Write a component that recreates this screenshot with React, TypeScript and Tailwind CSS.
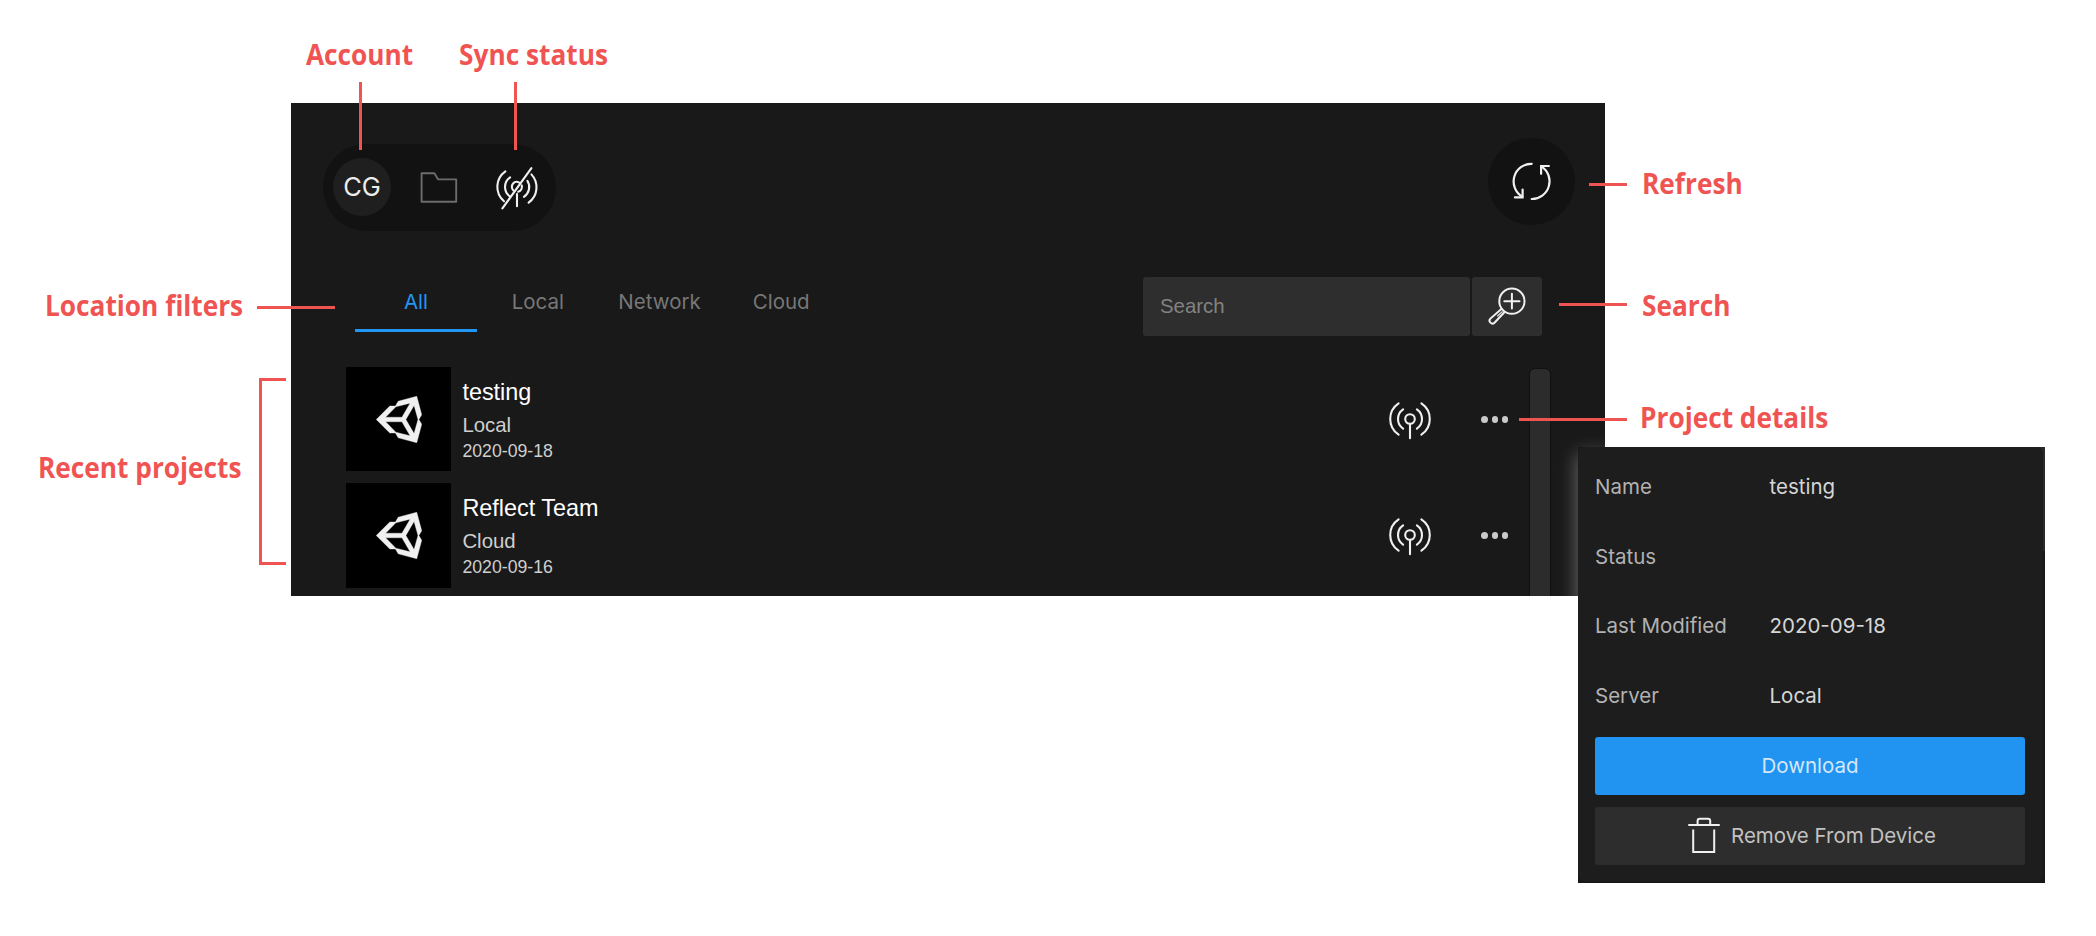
import type { ReactNode } from "react";

const INTER = "font-['Inter','Liberation_Sans',sans-serif]";
const ARIAL = "font-['Liberation_Sans',Arial,sans-serif]";

function FolderIcon() {
  return (
    <svg width="40" height="34" viewBox="0 0 40 34" fill="none" stroke="#6c6c6c" strokeWidth="1.9" strokeLinejoin="round">
      <path d="M2.6 2.2H15.4L19.2 8.4H37.2V30.8H2.6Z" />
    </svg>
  );
}

function AntennaIcon() {
  return (
    <svg width="44" height="42" viewBox="-22 -18 44 42" fill="none" stroke="#f0f0f0" strokeWidth="2.1" strokeLinecap="round">
      <circle r="4.8" />
      <path d="M0 5V19.3" />
      <path d="M6.9 -9.6A11.6 11.6 0 0 1 6.9 9.6M-6.9 -9.6A11.6 11.6 0 0 0 -6.9 9.6" />
      <path d="M11.4 -15.7A18.9 18.9 0 0 1 11.4 15.7M-11.4 -15.7A18.9 18.9 0 0 0 -11.4 15.7" />
    </svg>
  );
}

function AntennaOffIcon() {
  return (
    <svg width="46" height="46" viewBox="-23 -22 46 46" fill="none" stroke="#f0f0f0" strokeWidth="2.1" strokeLinecap="round">
      <path d="M-14.6 21.4L14.4 -18.8" />
      <path d="M-3.6 3.4A4.8 4.8 0 0 1 3 -3.8" />
      <path d="M4.7 -1.6A4.8 4.8 0 0 1 1.2 4.7" />
      <path d="M0 7V19.3" />
      <path d="M-6.9 -9.6A11.6 11.6 0 0 0 -7.4 9.2" />
      <path d="M10.4 -6.2A11.6 11.6 0 0 1 6.9 9.8" />
      <path d="M-11.6 -15.7A18.9 18.9 0 0 0 -13 14.2" />
      <path d="M14.4 -12.6A18.9 18.9 0 0 1 11.6 15.7" />
    </svg>
  );
}

function RefreshIcon() {
  return (
    <svg width="44" height="44" viewBox="-21.7 -21.4 44 44" fill="none" stroke="#f0f0f0" strokeWidth="2.2" strokeLinecap="round" strokeLinejoin="miter">
      <path d="M0 -17.6A17.7 17.7 0 0 0 -9.6 15.2" />
      <path d="M-16.8 16H-9.1V8.2" />
      <path d="M0 17.6A17.7 17.7 0 0 0 10 -14.8" />
      <path d="M17.2 -15.4H9.4V-7.6" />
    </svg>
  );
}

function MagnifierIcon() {
  return (
    <svg width="40" height="40" viewBox="0 0 40 40" fill="none" stroke="#f0f0f0" strokeWidth="2" strokeLinecap="round">
      <circle cx="25.9" cy="15.2" r="12.6" />
      <path d="M25.9 7.8V22.6M18.3 15.2H33.5" />
      <path d="M15.4 23L4.4 32.6A2.9 2.9 0 0 0 8.5 36.7L18.6 26" />
      <path d="M16.2 25.6L11.6 30" strokeWidth="1.1" />
    </svg>
  );
}

function TrashIcon() {
  return (
    <svg width="34" height="38" viewBox="0 0.6 34 38" fill="none" stroke="#f0f0f0" strokeWidth="2" strokeLinecap="round">
      <path d="M2 8.6H32" />
      <path d="M10.6 8V4.6Q10.6 2.4 12.8 2.4H21Q23.2 2.4 23.2 4.6V8" />
      <path d="M6.2 13V35.5H27.2V13" strokeLinecap="butt" />
    </svg>
  );
}

function CubeIcon() {
  return (
    <svg width="46" height="47" viewBox="13 12 488 488" preserveAspectRatio="none" fill="#f0f0f0" stroke="#f0f0f0" strokeWidth="4">
      <path d="M498.11 206.4L445.31 14.72 248.2 66.08 219 116.14l-59.2-.43L15.54 256l144.28 140.32 59.17-.43 29.24 50 197.08 51.36 52.8-191.62L468.11 256zM223.77 124.2L374.55 86.51 288 232.33H114.87zm0 263.63L114.87 279.71H288l86.55 145.81zm193 14L330.17 256l86.58-145.84L458.56 256z" />
    </svg>
  );
}

function Label({ className, children }: { className: string; children: ReactNode }) {
  return (
    <span
      className={`absolute h-10 origin-left scale-x-[0.905] whitespace-nowrap font-['Open_Sans','Noto_Sans',sans-serif] text-[29px] font-bold leading-10 text-[#f05452] ${className}`}
    >
      {children}
    </span>
  );
}

function Line({ className }: { className: string }) {
  return <div className={`absolute bg-[#f05452] ${className}`} />;
}

function Project({ name, place, date, thumb }: { name: string; place: string; date: string; thumb: string }) {
  return (
    <div className="flex h-[116px] items-start">
      <div className={`flex w-[105px] shrink-0 items-center justify-center bg-black ${thumb}`}>
        <CubeIcon />
      </div>
      <div className={`ml-[11.4px] flex grow flex-col pt-[9px] ${ARIAL}`}>
        <span className="text-[23.4px] leading-[33px] text-white">{name}</span>
        <span className="text-[20.4px] leading-[33.5px] text-[#cfcfcf]">{place}</span>
        <span className="text-[17.7px] leading-[16px] text-[#cfcfcf]">{date}</span>
      </div>
      <div className="pt-[34px]">
        <AntennaIcon />
      </div>
      <div className="ml-[49px] mr-[21.7px] flex gap-1 pt-[49.4px]">
        <i className="size-[6.3px] rounded-full bg-[#cacaca]" />
        <i className="size-[6.3px] rounded-full bg-[#cacaca]" />
        <i className="size-[6.3px] rounded-full bg-[#cacaca]" />
      </div>
    </div>
  );
}

function Detail({ label, value }: { label: string; value?: string }) {
  return (
    <div className="flex h-[69.7px] items-center text-[20.5px] leading-6">
      <span className="w-[174.5px] text-[#b2b2b2]">{label}</span>
      <span className="text-[#d6d6d6]">{value}</span>
    </div>
  );
}

export default function App() {
  return (
    <div className="relative h-[936px] w-[2096px] overflow-hidden bg-white pl-[291px] pt-[103px]">
      <main className="relative h-[493px] w-[1314px] overflow-hidden bg-[#191919]">
        <header className="flex h-[128px] items-start justify-between pl-8 pr-[30px] pt-[35px]">
          <div className="mt-[6px] flex h-[87px] w-[233px] items-center rounded-full bg-[#121212] pl-[10px]">
            <div className={`mb-px flex size-[58px] items-center justify-center rounded-full bg-[#1f1f1f] pt-px text-[25.5px] text-[#ececec] ${INTER}`}>CG</div>
            <div className="ml-[28px] mt-px">
              <FolderIcon />
            </div>
            <div className="ml-[34.5px]">
              <AntennaOffIcon />
            </div>
          </div>
          <div className="flex size-[87px] items-center justify-center rounded-full bg-[#121212]">
            <RefreshIcon />
          </div>
        </header>

        <div className="mt-[46px] flex h-[59px] items-start justify-between pl-16 pr-[63px]">
          <nav className={`flex text-[20.5px] text-[#777777] ${INTER}`}>
            <span className="flex h-[55px] w-[122px] items-center justify-center border-b-[3px] border-[#2196f3] pb-px text-[#2196f3]">All</span>
            <span className="flex h-[52px] w-[121.7px] items-center justify-center pb-px">Local</span>
            <span className="flex h-[52px] w-[121.7px] items-center justify-center pb-px">Network</span>
            <span className="flex h-[52px] w-[121.7px] items-center justify-center pb-px">Cloud</span>
          </nav>
          <div className="flex gap-[2px]">
            <div className={`flex h-[59px] w-[327px] items-center rounded-[3px] bg-[#2e2e2e] pl-[17px] text-[20.4px] text-[#828282] ${ARIAL}`}>
              <span>Search</span>
            </div>
            <div className="flex h-[59px] w-[70px] items-center justify-center rounded-[3px] bg-[#2e2e2e] pb-px pr-[2px]">
              <MagnifierIcon />
            </div>
          </div>
        </div>

        <div className="flex pl-[55px] pt-[31px]">
          <div className="w-[1184px]">
            <Project name="testing" place="Local" date="2020-09-18" thumb="h-[104px]" />
            <Project name="Reflect Team" place="Cloud" date="2020-09-16" thumb="h-[105px]" />
          </div>
          <div className="mt-[2px] h-[240px] w-5 rounded-[5px] bg-[#2c2c2c] shadow-[0_0_0_1px_#111111]" />
        </div>

        <div className="absolute left-[1287px] top-[344px] h-[436px] w-[467px] shadow-[0_8px_18px_1px_rgba(255,255,255,0.34)]" />
      </main>

      <aside className="absolute left-[1578px] top-[447px] h-[436px] w-[467px] bg-[#181818]">
        <div className="absolute right-0 top-0 h-[104px] w-2 bg-[#2a2a2a]" />
        <div className={`relative mr-[2px] h-[434px] rounded-md bg-[#1d1d1d] pl-[17px] pr-[18px] pt-[5.2px] ${INTER}`}>
          <Detail label="Name" value="testing" />
          <Detail label="Status" />
          <Detail label="Last Modified" value="2020-09-18" />
          <Detail label="Server" value="Local" />
          <button className="mt-[6px] flex h-[58px] w-[430px] items-center justify-center rounded-[3px] bg-[#2193f0] text-[20.5px] text-[#d3e7f8]">Download</button>
          <button className="mt-3 flex h-[58px] w-[430px] items-center rounded-[3px] bg-[#2d2d2d] pl-[91.5px] text-[20.5px] text-[#c2c2c2]">
            <TrashIcon />
            <span className="ml-[10.5px] pt-px">Remove From Device</span>
          </button>
        </div>
      </aside>

      <Label className="left-[306px] top-[34px]">Account</Label>
      <Line className="left-[359px] top-[82px] h-[68px] w-[3px]" />
      <Label className="left-[459px] top-[34px]">Sync status</Label>
      <Line className="left-[514px] top-[82px] h-[68px] w-[3px]" />
      <Label className="left-[1641.5px] top-[163px]">Refresh</Label>
      <Line className="left-[1589px] top-[183px] h-[3px] w-[38px]" />
      <Label className="left-[1642px] top-[285px]">Search</Label>
      <Line className="left-[1559px] top-[303px] h-[3px] w-[68px]" />
      <Label className="left-[1640px] top-[397px]">Project details</Label>
      <Line className="left-[1519px] top-[418px] h-[3px] w-[108px]" />
      <Label className="left-[45px] top-[285px]">Location filters</Label>
      <Line className="left-[257px] top-[306px] h-[3px] w-[78px]" />
      <Label className="left-[38px] top-[447px]">Recent projects</Label>
      <div className="absolute left-[259px] top-[378px] h-[187px] w-[27px] border-y-[3px] border-l-[3px] border-[#f05452]" />
    </div>
  );
}
